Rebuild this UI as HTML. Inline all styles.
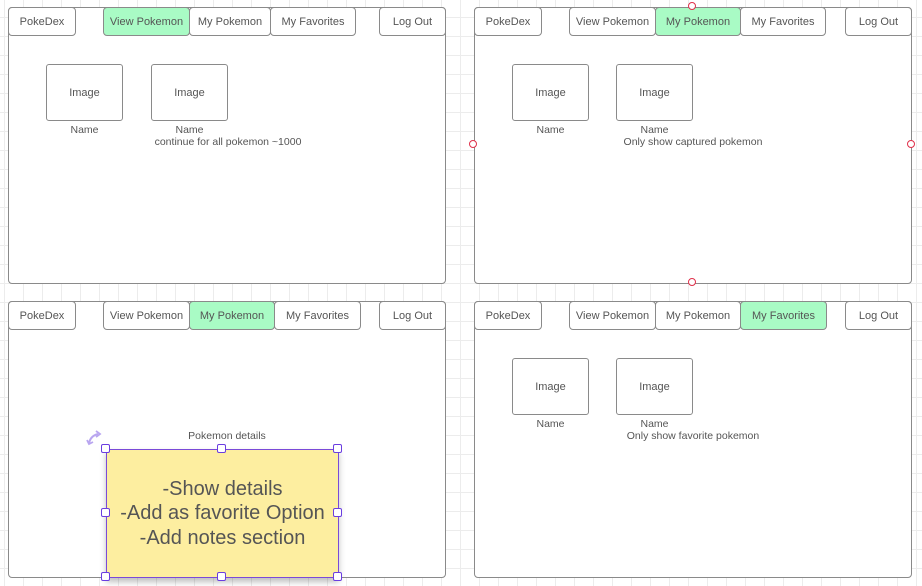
<!DOCTYPE html>
<html><head><style>
body{margin:0;width:922px;height:586px;overflow:hidden;background-color:#fff;
background-image:linear-gradient(#ececec 1px,transparent 1px),linear-gradient(90deg,#ececec 1px,transparent 1px);
background-size:19px 19px;background-position:4px 17px;font-family:"Liberation Sans",sans-serif;color:#555;position:relative}
.a{position:absolute;box-sizing:border-box}
.p{border:1px solid #8a8a8a;border-radius:4px;background:#fff}
.t{border:1px solid #8a8a8a;border-radius:4px;background:#fff;font-size:11px;display:flex;align-items:center;justify-content:center;height:29px}
.g{background:#a9fbc5}
.im{border:1px solid #8a8a8a;border-radius:3px;background:#fff;width:77px;height:57px;font-size:11px;display:flex;align-items:center;justify-content:center}
.tx{font-size:10.5px;text-align:center;white-space:nowrap}
.h{width:9px;height:9px;border:1.5px solid #6a3de0;background:#fff;border-radius:2px}
.r{width:8px;height:8px;border:1px solid #e0304a;border-radius:50%;background:#fff}
</style></head><body>
<!-- panels -->
<div class="a p" style="left:8px;top:7px;width:438px;height:277px"></div>
<div class="a p" style="left:474px;top:7px;width:438px;height:277px"></div>
<div class="a p" style="left:8px;top:301px;width:438px;height:277px"></div>
<div class="a p" style="left:474px;top:301px;width:438px;height:277px"></div>

<!-- TL tabs -->
<div class="a t" style="left:8px;top:7px;width:68px">PokeDex</div>
<div class="a t g" style="left:103px;top:7px;width:87px">View Pokemon</div>
<div class="a t" style="left:189px;top:7px;width:82px">My Pokemon</div>
<div class="a t" style="left:270px;top:7px;width:86px">My Favorites</div>
<div class="a t" style="left:379px;top:7px;width:67px">Log Out</div>
<!-- TR tabs -->
<div class="a t" style="left:474px;top:7px;width:68px">PokeDex</div>
<div class="a t" style="left:569px;top:7px;width:87px">View Pokemon</div>
<div class="a t g" style="left:655px;top:7px;width:86px">My Pokemon</div>
<div class="a t" style="left:740px;top:7px;width:86px">My Favorites</div>
<div class="a t" style="left:845px;top:7px;width:67px">Log Out</div>
<!-- BL tabs -->
<div class="a t" style="left:8px;top:301px;width:68px">PokeDex</div>
<div class="a t" style="left:103px;top:301px;width:87px">View Pokemon</div>
<div class="a t g" style="left:189px;top:301px;width:86px">My Pokemon</div>
<div class="a t" style="left:274px;top:301px;width:87px">My Favorites</div>
<div class="a t" style="left:379px;top:301px;width:67px">Log Out</div>
<!-- BR tabs -->
<div class="a t" style="left:474px;top:301px;width:68px">PokeDex</div>
<div class="a t" style="left:569px;top:301px;width:87px">View Pokemon</div>
<div class="a t" style="left:655px;top:301px;width:86px">My Pokemon</div>
<div class="a t g" style="left:740px;top:301px;width:87px">My Favorites</div>
<div class="a t" style="left:845px;top:301px;width:67px">Log Out</div>

<!-- TL content -->
<div class="a im" style="left:46px;top:64px">Image</div>
<div class="a im" style="left:151px;top:64px">Image</div>
<div class="a tx" style="left:46px;top:124px;width:77px">Name</div>
<div class="a tx" style="left:151px;top:124px;width:77px">Name</div>
<div class="a tx" style="left:128px;top:136px;width:200px">continue for all pokemon ~1000</div>
<!-- TR content -->
<div class="a im" style="left:512px;top:64px">Image</div>
<div class="a im" style="left:616px;top:64px">Image</div>
<div class="a tx" style="left:512px;top:124px;width:77px">Name</div>
<div class="a tx" style="left:616px;top:124px;width:77px">Name</div>
<div class="a tx" style="left:593px;top:136px;width:200px">Only show captured pokemon</div>
<div class="a r" style="left:688px;top:2px"></div>
<div class="a r" style="left:688px;top:278px"></div>
<div class="a r" style="left:469px;top:140px"></div>
<div class="a r" style="left:907px;top:140px"></div>
<!-- BR content -->
<div class="a im" style="left:512px;top:358px">Image</div>
<div class="a im" style="left:616px;top:358px">Image</div>
<div class="a tx" style="left:512px;top:418px;width:77px">Name</div>
<div class="a tx" style="left:616px;top:418px;width:77px">Name</div>
<div class="a tx" style="left:593px;top:430px;width:200px">Only show favorite pokemon</div>
<!-- BL content -->
<div class="a tx" style="left:167px;top:430px;width:120px">Pokemon details</div>
<div class="a" style="left:106px;top:449px;width:233px;height:129px;background:#fdeea0;border:1px solid #7a4ad8;box-shadow:0 4px 6px rgba(0,0,0,.25);display:flex;align-items:center;justify-content:center;text-align:center;font-size:20px;line-height:24.5px;color:#555">-Show details<br>-Add as favorite Option<br>-Add notes section</div>
<svg class="a" style="left:86px;top:430px" width="18" height="16" viewBox="0 0 18 16"><path d="M3 14 Q4 6 12 4" fill="none" stroke="#b9a6f0" stroke-width="2"/><path d="M10 1 L14 4 L10 7" fill="none" stroke="#b9a6f0" stroke-width="1.8"/><path d="M1 10 L3 14 L7 12" fill="none" stroke="#b9a6f0" stroke-width="1.8"/></svg>
<div class="a h" style="left:101px;top:444px"></div>
<div class="a h" style="left:217px;top:444px"></div>
<div class="a h" style="left:333px;top:444px"></div>
<div class="a h" style="left:101px;top:508px"></div>
<div class="a h" style="left:333px;top:508px"></div>
<div class="a h" style="left:101px;top:572px"></div>
<div class="a h" style="left:217px;top:572px"></div>
<div class="a h" style="left:333px;top:572px"></div>
</body></html>
